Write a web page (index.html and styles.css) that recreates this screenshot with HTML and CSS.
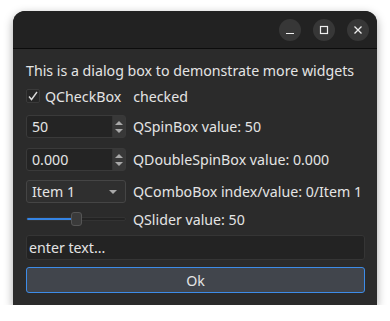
FILE: index.html
```html
<!DOCTYPE html>
<html lang="en">
<head>
    <meta charset="UTF-8">
    <title>Dialog</title>
    <link rel="stylesheet" href="styles.css">
</head>
<body>
    <div class="window">
        <div class="titlebar">
            <button class="wbtn" aria-label="Minimize">
                <svg width="10" height="10" viewBox="0 0 10 10"><path d="M1 8.5h8" stroke="#eee" stroke-width="1.2"/></svg>
            </button>
            <button class="wbtn" aria-label="Maximize">
                <svg width="10" height="10" viewBox="0 0 10 10"><rect x="1.5" y="1.5" width="7" height="7" fill="none" stroke="#eee" stroke-width="1.2"/></svg>
            </button>
            <button class="wbtn" aria-label="Close">
                <svg width="10" height="10" viewBox="0 0 10 10"><path d="M1.5 1.5l7 7M8.5 1.5l-7 7" stroke="#eee" stroke-width="1.3"/></svg>
            </button>
        </div>
        <div class="content">
            <div class="row info">This is a dialog box to demonstrate more widgets</div>
            <div class="row check-row">
                <span class="checkbox">
                    <svg width="12" height="12" viewBox="0 0 12 12"><path d="M2 6.5l2.5 3L10 2" fill="none" stroke="#d8d8d8" stroke-width="1.4"/></svg>
                </span>
                <span class="check-label">QCheckBox</span>
                <span>checked</span>
            </div>
            <div class="row field-row">
                <div class="spin">
                    <span class="spin-text">50</span>
                    <span class="spin-arrows"><i class="up"></i><i class="down"></i></span>
                </div>
                <span>QSpinBox value: 50</span>
            </div>
            <div class="row field-row gap10">
                <div class="spin">
                    <span class="spin-text">0.000</span>
                    <span class="spin-arrows"><i class="up"></i><i class="down"></i></span>
                </div>
                <span>QDoubleSpinBox value: 0.000</span>
            </div>
            <div class="row field-row">
                <div class="combo">
                    <span>Item 1</span>
                    <i class="down"></i>
                </div>
                <span>QComboBox index/value: 0/Item 1</span>
            </div>
            <div class="row slider-row">
                <div class="slider">
                    <div class="groove"><div class="fill" style="width: 45px"></div></div>
                    <div class="handle"></div>
                </div>
                <span>QSlider value: 50</span>
            </div>
            <div class="lineedit">enter text...</div>
            <button class="ok">Ok</button>
        </div>
    </div>
</body>
</html>
```

FILE: styles.css
```css
body {
    margin: 0;
    padding: 11px 13px 0 13px;
    background: #ffffff;
    font-family: "Noto Sans", "DejaVu Sans", sans-serif;
    font-size: 14.2px;
    color: #e4e4e4;
}
.window {
    width: 364px;
    height: 294px;
    background: #2b2b2b;
    border-radius: 12px 12px 0 0;
    box-shadow: 0 3px 10px rgba(0, 0, 0, 0.35);
    overflow: hidden;
    display: flex;
    flex-direction: column;
}
.titlebar {
    height: 37px;
    background: #222222;
    border-bottom: 1px solid #0c0c0c;
    display: flex;
    align-items: center;
    justify-content: flex-end;
    gap: 12px;
    padding-right: 8px;
}
.wbtn {
    width: 22px;
    height: 22px;
    border-radius: 50%;
    border: none;
    background: #373737;
    padding: 0;
    display: flex;
    align-items: center;
    justify-content: center;
}
.content {
    padding: 11px 12px 12px 13px;
    display: flex;
    flex-direction: column;
}
.row {
    display: flex;
    align-items: center;
}
.info {
    height: 20px;
}
.check-row {
    height: 20px;
    margin-top: 6px;
}
.checkbox {
    width: 14px;
    height: 14px;
    border: 1px solid #3a3a3a;
    border-radius: 2px;
    background: #262626;
    display: flex;
    align-items: center;
    justify-content: center;
    box-sizing: border-box;
}
.check-label {
    margin-left: 5px;
    margin-right: 12px;
}
.field-row {
    margin-top: 9px;
    height: 23px;
    gap: 7px;
}
.gap10 {
    margin-top: 10px;
}
.spin, .combo {
    width: 100px;
    height: 23px;
    box-sizing: border-box;
    border: 1px solid #3a3a3a;
    border-radius: 3px;
    background: #242424;
    display: flex;
    align-items: center;
}
.spin-text {
    flex: 1;
    padding-left: 5px;
}
.spin-arrows {
    width: 12px;
    height: 100%;
    background: #383838;
    border-left: 1px solid #333;
    display: flex;
    flex-direction: column;
    align-items: center;
    justify-content: center;
    gap: 4px;
}
.up {
    width: 0;
    height: 0;
    border-left: 4px solid transparent;
    border-right: 4px solid transparent;
    border-bottom: 4px solid #a8a8a8;
}
.down {
    width: 0;
    height: 0;
    border-left: 4px solid transparent;
    border-right: 4px solid transparent;
    border-top: 4px solid #a8a8a8;
}
.combo {
    background: #2f2f2f;
    border-color: #454545;
    justify-content: space-between;
    padding: 0 8px 0 5px;
}
.slider-row {
    margin-top: 7px;
    height: 18px;
    gap: 7px;
}
.slider {
    position: relative;
    width: 100px;
    height: 18px;
    display: flex;
    align-items: center;
}
.groove {
    width: 100%;
    height: 4px;
    border-radius: 2px;
    background: #232323;
    border: 1px solid #333;
    box-sizing: border-box;
}
.fill {
    height: 100%;
    background: #3584e4;
    border-radius: 2px;
}
.handle {
    position: absolute;
    left: 45px;
    top: 2px;
    width: 11px;
    height: 14px;
    box-sizing: border-box;
    background: #3a3a3a;
    border: 1px solid #555;
    border-radius: 3px;
}
.lineedit {
    margin-top: 7px;
    height: 25px;
    box-sizing: border-box;
    border: 1px solid #353535;
    border-radius: 3px;
    background: #232323;
    padding-left: 2px;
    display: flex;
    align-items: center;
}
.ok {
    margin-top: 7px;
    height: 26px;
    border: 1px solid #3d8ce8;
    border-radius: 3px;
    background: #41454c;
    color: #e4e4e4;
    font-family: inherit;
    font-size: 14.2px;
    padding: 0;
}
```
